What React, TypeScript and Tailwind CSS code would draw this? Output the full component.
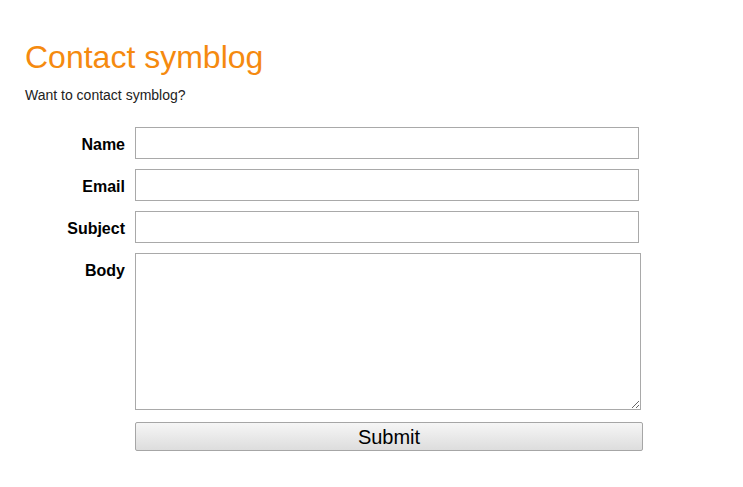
export default function App() {
  const fields = ['Name', 'Email', 'Subject'];

  return (
    <div className="min-h-[487px] bg-white px-[25px] pt-[39px] font-['Liberation_Sans',Arial,sans-serif] text-black">
      <h1 className="text-[32px] leading-[37px] text-[#f58a0f]">Contact symblog</h1>
      <p className="mt-[11px] text-[14px] leading-[16px] text-[#222]">Want to contact symblog?</p>

      <form className="mt-[24px] flex flex-col gap-[10px]" onSubmit={(e) => e.preventDefault()}>
        {fields.map((f) => (
          <div key={f} className="flex items-start gap-[10px]">
            <label className="w-[100px] pt-[9px] text-right text-[16px] font-bold leading-[18px]">{f}</label>
            <input
              type="text"
              className="h-[32px] w-[504px] border border-[#a9a9a9] bg-white px-1 text-[16px] outline-none"
            />
          </div>
        ))}
        <div className="flex items-start gap-[10px]">
          <label className="w-[100px] pt-[9px] text-right text-[16px] font-bold leading-[18px]">Body</label>
          <textarea className="block h-[157px] w-[506px] resize border border-[#a9a9a9] bg-white px-1 text-[16px] outline-none" />
        </div>
        <div className="mt-[2px] flex gap-[10px]">
          <div className="w-[100px]" />
          <button
            type="submit"
            className="h-[29px] w-[508px] rounded-[2px] border border-[#a6a6a6] bg-gradient-to-b from-[#f6f6f6] to-[#dddddd] text-[20px] leading-[24px] text-black"
          >
            Submit
          </button>
        </div>
      </form>
    </div>
  );
}
